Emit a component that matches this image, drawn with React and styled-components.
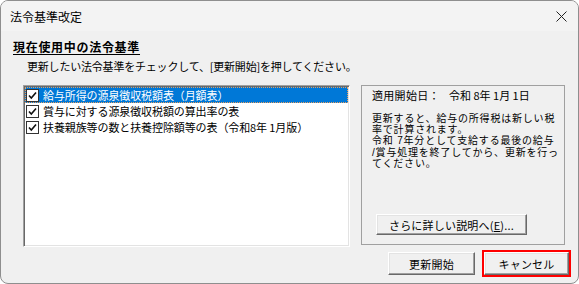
import React from 'react';
import styled, { createGlobalStyle } from 'styled-components';

const GlobalStyle = createGlobalStyle`
   html, body {
       margin: 0;
       padding: 0;
       background: #ffffff;
   }
   * {
       box-sizing: border-box;
   }
`;

const FONT = `"Noto Sans CJK JP", "Noto Sans", sans-serif`;
const TIGHT_FONT = `"Liberation Sans", "Noto Sans CJK JP", sans-serif`;

const Window = styled.div`
   width: 579px;
   height: 284px;
   border: 1px solid #8e8e8e;
   border-radius: 8px;
   overflow: hidden;
   background: #f0f0f0;
   font-family: ${FONT};
   color: #000;
   display: flex;
   flex-direction: column;
`;

const TitleBar = styled.div`
   height: 30px;
   flex: none;
   background: #f3f3f3;
   display: flex;
   align-items: center;
   justify-content: space-between;
   padding: 0 10px 0 9px;
   font-size: 12px;
`;

const CloseIcon = styled.svg`
   width: 11px;
   height: 11px;
   margin-right: 1px;
`;

const Body = styled.div`
   flex: 1;
   padding: 9px 7px 0 12px;
   display: flex;
   flex-direction: column;
`;

const Heading = styled.div`
   font-size: 12px;
   font-weight: 700;
   letter-spacing: 0.7px;
   line-height: 14px;
   text-decoration: underline;
   text-underline-offset: 2px;
`;

const Instruction = styled.div`
   margin: 5px 0 0 14px;
   font-size: 11px;
   letter-spacing: -0.2px;
   line-height: 14px;
   white-space: nowrap;
`;

const ContentRow = styled.div`
   margin: 12px 0 0 10px;
   display: flex;
   gap: 11px;
   align-items: flex-start;
`;

const ListBox = styled.div`
   width: 327px;
   height: 162px;
   background: #fff;
   border: 1px solid;
   border-color: #a0a0a0 #ffffff #ffffff #a0a0a0;
   box-shadow: inset 1px 1px 0 #696969, inset -1px -1px 0 #e3e3e3;
   padding: 1px;
`;

const ListRow = styled.div`
   height: 16px;
   display: flex;
   align-items: center;
   padding-left: 1px;
   gap: 4px;
   font-size: 11px;
   letter-spacing: -0.1px;
   white-space: nowrap;
   background: ${p => (p.$selected ? '#0078d7' : 'transparent')};
   color: ${p => (p.$selected ? '#fff' : '#000')};
   outline: ${p => (p.$selected ? '1px dotted #e8a060' : 'none')};
   outline-offset: -1px;
`;

const Check = styled.svg`
   width: 13px;
   height: 13px;
   flex: none;
`;

const InfoPanel = styled.div`
   width: 204px;
   height: 160px;
   border: 1px solid #a0a0a0;
   padding: 2px 0 9px 10px;
   display: flex;
   flex-direction: column;
   font-size: 11px;
`;

const StartLine = styled.div`
   line-height: 14px;
   display: flex;
   white-space: nowrap;
`;

const StartLabel = styled.span`
   width: 77px;
   letter-spacing: 0.3px;
`;

const Description = styled.div`
   margin-top: 11px;
   font-family: ${TIGHT_FONT};
   font-size: 10px;
   line-height: 11.2px;
   letter-spacing: 0.8px;
   white-space: nowrap;
`;

const Button = styled.button`
   font-family: ${FONT};
   font-size: 11px;
   color: #000;
   width: ${p => p.$width}px;
   height: ${p => p.$height || 23}px;
   background: #f0f0f0;
   border: 1px solid;
   border-color: #ffffff #696969 #696969 #ffffff;
   box-shadow: inset -1px -1px 0 #a0a0a0, inset 1px 1px 0 #e3e3e3;
   padding: 0;
   display: flex;
   align-items: center;
   justify-content: center;
   letter-spacing: 0.2px;
`;

const DetailButton = styled(Button)`
   margin: auto 0 0 4px;
`;

const ButtonRow = styled.div`
   margin-top: 3px;
   display: flex;
   justify-content: flex-end;
   align-items: center;
   gap: 7px;
`;

const FocusFrame = styled.div`
   border: 2px solid #ff0000;
   display: flex;
`;

const Mnemonic = styled.span`
   text-decoration: underline;
`;

function CheckBox() {
    return (
        <Check viewBox="0 0 13 13">
            <rect x="0.5" y="0.5" width="12" height="12" fill="#fff" stroke="#333" />
            <polyline points="3,6.5 5.3,9 10,3.5" fill="none" stroke="#111" strokeWidth="1.6" />
        </Check>
    );
}

const items = [
    '給与所得の源泉徴収税額表（月額表）',
    '賞与に対する源泉徴収税額の算出率の表',
    '扶養親族等の数と扶養控除額等の表（令和8年 1月版）',
];

export default function App() {
    return (
        <>
            <GlobalStyle />
            <Window>
                <TitleBar>
                    <span>法令基準改定</span>
                    <CloseIcon viewBox="0 0 11 11">
                        <path d="M0.5 0.5 L10.5 10.5 M10.5 0.5 L0.5 10.5" stroke="#222" strokeWidth="1" />
                    </CloseIcon>
                </TitleBar>
                <Body>
                    <Heading>現在使用中の法令基準</Heading>
                    <Instruction>更新したい法令基準をチェックして、[更新開始]を押してください。</Instruction>
                    <ContentRow>
                        <ListBox>
                            {items.map((text, i) => (
                                <ListRow key={text} $selected={i === 0}>
                                    <CheckBox />
                                    <span>{text}</span>
                                </ListRow>
                            ))}
                        </ListBox>
                        <InfoPanel>
                            <StartLine>
                                <StartLabel>適用開始日：</StartLabel>
                                <span>令和 8年 1月 1日</span>
                            </StartLine>
                            <Description>
                                更新すると、給与の所得税は新しい税<br />
                                率で計算されます。<br />
                                令和 7年分として支給する最後の給与<br />
                                /賞与処理を終了してから、更新を行っ<br />
                                てください。
                            </Description>
                            <DetailButton $width={151} $height={21}>
                                さらに詳しい説明へ(<Mnemonic>E</Mnemonic>)...
                            </DetailButton>
                        </InfoPanel>
                    </ContentRow>
                    <ButtonRow>
                        <Button $width={87}>更新開始</Button>
                        <FocusFrame>
                            <Button $width={85}>キャンセル</Button>
                        </FocusFrame>
                    </ButtonRow>
                </Body>
            </Window>
        </>
    );
}
